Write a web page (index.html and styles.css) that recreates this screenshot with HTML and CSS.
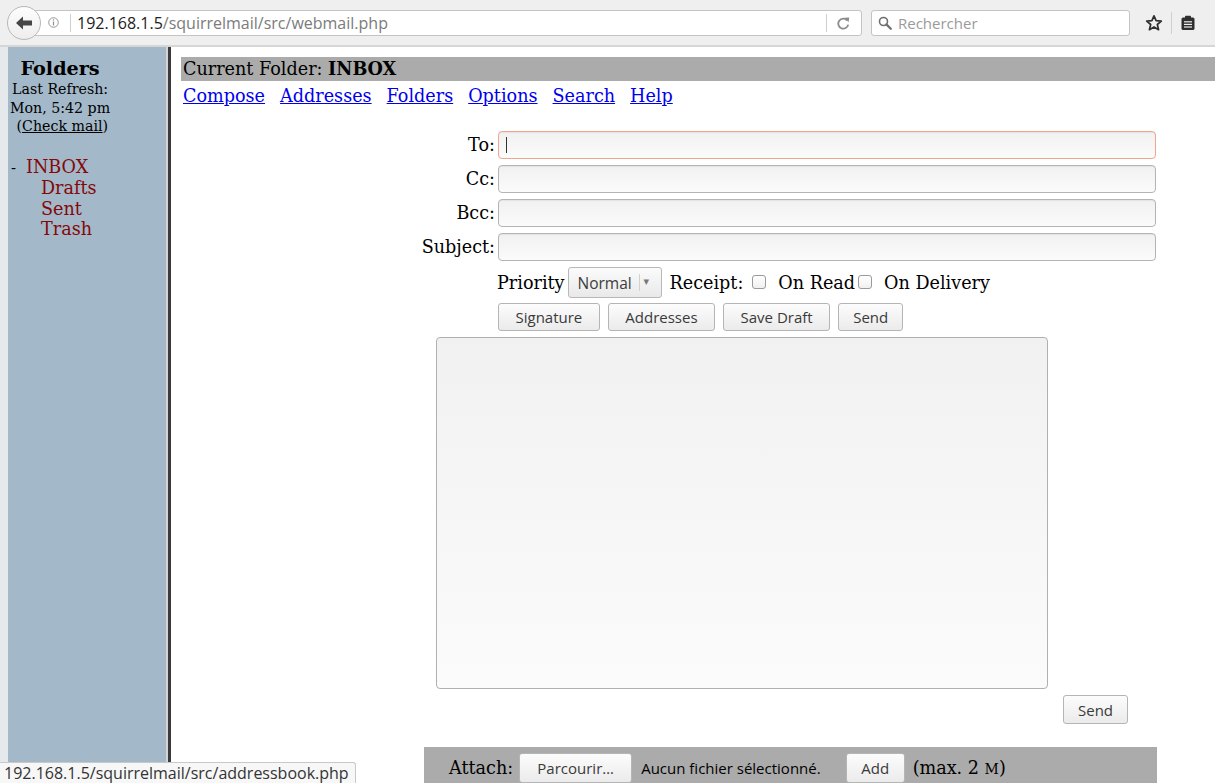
FILE: index.html
```html
<!DOCTYPE html>
<html lang="fr">
<head>
<meta charset="utf-8">
<title>SquirrelMail - Compose</title>
<link rel="stylesheet" href="styles.css">
</head>
<body>
<div class="window">
  <header class="toolbar">
    <button class="back" type="button" aria-label="Back">
      <svg width="18" height="14" viewBox="0 0 18 14"><polygon points="1,7 8,0.5 8,4.5 17,4.5 17,9.5 8,9.5 8,13.5" fill="#454545"/></svg>
    </button>
    <div class="urlbar">
      <svg class="info-icon" width="11" height="11" viewBox="0 0 12 12"><circle cx="6" cy="6" r="5.2" fill="none" stroke="#8c8c8c" stroke-width="1"/><line x1="6" y1="5" x2="6" y2="9.2" stroke="#8c8c8c" stroke-width="1.3"/><circle cx="6" cy="3.3" r="0.8" fill="#8c8c8c"/></svg>
      <span class="url-sep"></span>
      <span class="url"><span class="host">192.168.1.5</span>/squirrelmail/src/webmail.php</span>
      <span class="url-sep url-sep-end"></span>
      <svg class="reload" width="14" height="14" viewBox="0 0 14 14"><path d="M11 4.3A5 5 0 1 0 12.2 8.6" fill="none" stroke="#8c8c8c" stroke-width="1.8"/><polygon points="8.4,1.8 13.2,1.4 12.6,6.2" fill="#8c8c8c"/></svg>
    </div>
    <div class="searchbar">
      <svg width="14" height="14" viewBox="0 0 14 14"><circle cx="5.5" cy="5.5" r="4" fill="none" stroke="#6f6f6f" stroke-width="1.6"/><line x1="8.4" y1="8.4" x2="12.8" y2="12.8" stroke="#6f6f6f" stroke-width="2.2" stroke-linecap="round"/></svg>
      <span class="search-placeholder">Rechercher</span>
    </div>
    <svg class="tool-icon star" width="18" height="18" viewBox="0 0 18 18"><polygon points="9,1.8 11.1,6.7 16.3,7.1 12.3,10.5 13.6,15.7 9,12.9 4.4,15.7 5.7,10.5 1.7,7.1 6.9,6.7" fill="none" stroke="#2f2f2f" stroke-width="1.7" stroke-linejoin="round"/></svg>
    <span class="tool-sep"></span>
    <svg class="tool-icon reader" width="16" height="16" viewBox="0 0 16 16"><rect x="1.5" y="2.5" width="13" height="12.5" rx="1.6" fill="#2f2f2f"/><rect x="5" y="0.8" width="6" height="3" rx="0.8" fill="#2f2f2f"/><line x1="4" y1="6.8" x2="12" y2="6.8" stroke="#efefef" stroke-width="1.2"/><line x1="4" y1="9.4" x2="12" y2="9.4" stroke="#efefef" stroke-width="1.2"/><line x1="4" y1="12" x2="12" y2="12" stroke="#efefef" stroke-width="1.2"/></svg>
  </header>

  <div class="frames">
    <aside class="nav">
      <div class="nav-status">
        <div class="nav-title">Folders</div>
        <div class="nav-small">Last Refresh:</div>
        <div class="nav-small">Mon, 5:42 pm</div>
        <div class="nav-small">&nbsp;(<a class="check-mail" href="#">Check mail</a>)</div>
      </div>
      <ul class="folder-list">
        <li class="folder"><span class="toggle">-</span><a href="#">INBOX</a></li>
        <li class="folder folder-sub"><a href="#">Drafts</a></li>
        <li class="folder folder-sub"><a href="#">Sent</a></li>
        <li class="folder folder-sub"><a href="#">Trash</a></li>
      </ul>
    </aside>
    <div class="frame-border"></div>
    <main class="main">
      <div class="folder-bar">Current Folder: <b>INBOX</b></div>
      <nav class="menu">
        <a href="#">Compose</a>
        <a href="#">Addresses</a>
        <a href="#">Folders</a>
        <a href="#">Options</a>
        <a href="#">Search</a>
        <a href="#">Help</a>
      </nav>

      <form class="compose">
        <div class="field">
          <label class="field-label" for="send_to">To:</label>
          <span class="input-wrap input-wrap-active"><input class="field-input field-input-active" id="send_to" type="text"></span>
        </div>
        <div class="field">
          <label class="field-label" for="send_to_cc">Cc:</label>
          <span class="input-wrap"><input class="field-input" id="send_to_cc" type="text"></span>
        </div>
        <div class="field">
          <label class="field-label" for="send_to_bcc">Bcc:</label>
          <span class="input-wrap"><input class="field-input" id="send_to_bcc" type="text"></span>
        </div>
        <div class="field">
          <label class="field-label" for="subject">Subject:</label>
          <span class="input-wrap"><input class="field-input" id="subject" type="text"></span>
        </div>

        <div class="options">
          <span>Priority</span>
          <span class="select">
            <select class="select-box" name="mailprio">
              <option>Normal</option>
            </select>
          </span>
          <span class="opt-receipt">Receipt:</span>
          <input class="check check-read" type="checkbox">
          <span class="opt-label">On Read</span>
          <input class="check check-delivery" type="checkbox">
          <span class="opt-label">On Delivery</span>
        </div>

        <div class="actions">
          <button class="btn" type="button">Signature</button>
          <button class="btn" type="button">Addresses</button>
          <button class="btn" type="button">Save Draft</button>
          <button class="btn btn-send" type="button">Send</button>
        </div>

        <textarea class="message" name="body"></textarea>

        <div class="send-row">
          <button class="btn btn-send" type="button">Send</button>
        </div>

        <div class="attach">
          <span>Attach:</span>
          <button class="btn btn-browse" type="button">Parcourir…</button>
          <span class="file-name">Aucun fichier sélectionné.</span>
          <button class="btn btn-add" type="button">Add</button>
          <span class="max-size">(max. 2 <span class="unit">M</span>)</span>
        </div>
      </form>
    </main>
  </div>

  <div class="statusbar">192.168.1.5/squirrelmail/src/addressbook.php</div>
</div>
</body>
</html>
```

FILE: styles.css
```css
* {
  box-sizing: border-box;
}

html,
body {
  margin: 0;
  padding: 0;
}

body {
  font-family: "DejaVu Serif", serif;
  font-size: 17.6px;
  color: #000;
  background: #efefef;
  overflow: hidden;
}

.window {
  position: relative;
  width: 1215px;
  height: 783px;
  display: flex;
  flex-direction: column;
  overflow: hidden;
}

/* ---- browser toolbar ---- */
.toolbar {
  flex: none;
  height: 47px;
  display: flex;
  align-items: center;
  padding-left: 7px;
  background: #efefef;
  border-bottom: 2px solid #d6d6d6;
  font-family: "Open Sans", sans-serif;
}

.back {
  position: relative;
  z-index: 1;
  flex: none;
  width: 34px;
  height: 34px;
  padding: 0;
  border: 1px solid #b8b8b8;
  border-radius: 50%;
  background: linear-gradient(#fdfdfd, #ededed);
  display: flex;
  align-items: center;
  justify-content: center;
}

.urlbar {
  flex: none;
  width: 839px;
  height: 26px;
  margin-left: -18px;
  padding: 0 11px 0 24px;
  display: flex;
  align-items: center;
  background: #fff;
  border: 1px solid #c4c4c4;
  border-radius: 3px;
}

.info-icon {
  flex: none;
}

.url-sep {
  flex: none;
  width: 1px;
  height: 18px;
  margin-left: 11px;
  background: #cfcfcf;
}

.url {
  margin-left: 6px;
  font-size: 16px;
  color: #7b7b7b;
  white-space: nowrap;
  flex: 1;
}

.host {
  color: #222;
}

.url-sep-end {
  margin-left: 0;
  margin-right: 9px;
}

.reload {
  flex: none;
}

.searchbar {
  flex: none;
  width: 259px;
  height: 26px;
  margin-left: 9px;
  padding-left: 6px;
  display: flex;
  align-items: center;
  background: #fff;
  border: 1px solid #c4c4c4;
  border-radius: 3px;
}

.search-placeholder {
  margin-left: 6px;
  font-size: 15px;
  color: #9a9a9a;
}

.tool-icon {
  flex: none;
}

.star {
  margin-left: 15px;
}

.tool-sep {
  flex: none;
  width: 1px;
  height: 22px;
  margin-left: 8px;
  background: #d0d0d0;
}

.reader {
  margin-left: 8px;
}

/* ---- frameset ---- */
.frames {
  flex: 1;
  min-height: 0;
  display: flex;
  padding-left: 8px;
  background: #e6e9ec;
}

.nav {
  flex: none;
  width: 158px;
  padding: 10px 0 0 2px;
  background: #a3b8c9;
}

.nav-status {
  width: fit-content;
  text-align: center;
}

.nav-title {
  font-weight: bold;
  font-size: 19.2px;
  line-height: 23px;
}

.nav-small {
  font-size: 14.2px;
  line-height: 18.5px;
  white-space: nowrap;
}

.check-mail {
  color: #000;
}

.folder-list {
  list-style: none;
  margin: 21px 0 0;
  padding: 0 0 0 1px;
  line-height: 20.5px;
}

.folder a {
  color: #850808;
  text-decoration: none;
}

.toggle {
  display: inline-block;
  width: 15px;
  font-size: 15px;
}

.folder-sub {
  padding-left: 30px;
}

.frame-border {
  flex: none;
  width: 5px;
  border-left: 2px solid #d4d4d4;
  background: #3b3b3b;
}

.main {
  flex: 1;
  background: #fff;
  padding: 10px 0 0 10px;
}

.folder-bar {
  height: 24px;
  line-height: 24px;
  padding-left: 2px;
  background: #ababab;
}

.menu {
  display: flex;
  gap: 15px;
  margin-top: 5px;
  padding-left: 2px;
  line-height: 21px;
}

.menu a {
  color: #0000ee;
}

/* ---- compose form ---- */
.compose {
  margin-top: 24px;
}

.field {
  display: flex;
  align-items: center;
  gap: 3px;
  margin-bottom: 6px;
}

.field-label {
  width: 314px;
  text-align: right;
}

.input-wrap {
  position: relative;
  display: block;
}

.field-input {
  display: block;
  width: 658px;
  height: 28px;
  margin: 0;
  border: 1px solid #b4b4b4;
  border-radius: 4px;
  background: linear-gradient(#f1f1f1, #fbfbfb);
  box-shadow: inset 0 1px 1px rgba(0, 0, 0, 0.06);
  outline: none;
}

.field-input-active {
  border-color: #efa68a;
}

.input-wrap-active::after {
  content: "";
  position: absolute;
  left: 8px;
  top: 6px;
  width: 1px;
  height: 16px;
  background: #333;
}

.options {
  display: flex;
  align-items: center;
  height: 31px;
  margin-left: 316px;
  margin-bottom: 5px;
  white-space: nowrap;
}

.select {
  position: relative;
  margin-left: 3px;
  display: block;
}

.select-box {
  display: block;
  appearance: none;
  -webkit-appearance: none;
  width: 94px;
  height: 31px;
  margin: 0;
  padding: 0 0 0 9px;
  font-family: "Open Sans", sans-serif;
  font-size: 15.5px;
  color: #3c3c3c;
  border: 1px solid #b8b8b8;
  border-radius: 3px;
  background: linear-gradient(#fbfbfb, #e9e9e9);
}

.select::before {
  content: "";
  position: absolute;
  left: 71px;
  top: 7px;
  width: 1px;
  height: 17px;
  background: #d2d2d2;
}

.select::after {
  content: "▾";
  position: absolute;
  left: 76px;
  top: 8px;
  font-family: "DejaVu Sans", sans-serif;
  font-size: 11px;
  line-height: 14px;
  color: #777;
}

.opt-receipt {
  margin-left: 8px;
}

.check {
  appearance: none;
  -webkit-appearance: none;
  width: 14px;
  height: 14px;
  margin: -2px 0 0;
  border: 1px solid #9a9a9a;
  border-radius: 3px;
  background: linear-gradient(#fff, #f0f0f0);
}

.check-read {
  margin-left: 9px;
}

.check-delivery {
  margin-left: 3px;
}

.opt-label {
  margin-left: 12px;
}

.actions {
  display: flex;
  gap: 8px;
  margin-left: 317px;
}

.btn {
  height: 28px;
  margin: 0;
  padding: 0 16.5px;
  font-family: "Open Sans", sans-serif;
  font-size: 15px;
  color: #3a3a3a;
  border: 1px solid #b5b5b5;
  border-radius: 3px;
  background: linear-gradient(#fcfcfc, #ebebeb);
  white-space: nowrap;
}

.btn-send {
  width: 65px;
  padding: 0;
}

.message {
  display: block;
  width: 612px;
  height: 352px;
  margin: 6px 0 0 255px;
  resize: none;
  border: 1px solid #b0b0b0;
  border-radius: 4px;
  background: linear-gradient(#f1f1f1, #fbfbfb);
  outline: none;
}

.send-row {
  margin: 6px 0 0 882px;
}

.send-row .btn-send {
  height: 29px;
}

.attach {
  display: flex;
  align-items: center;
  width: 733px;
  height: 42px;
  margin: 23px 0 0 243px;
  padding-left: 25px;
  background: #ababab;
  white-space: nowrap;
}

.btn-browse {
  width: 113px;
  height: 30px;
  padding: 0;
  margin-left: 6px;
}

.file-name {
  margin-left: 9px;
  font-family: "Open Sans", sans-serif;
  font-size: 15px;
}

.btn-add {
  width: 59px;
  height: 30px;
  padding: 0;
  margin-left: 25px;
}

.max-size {
  margin-left: 8px;
}

.unit {
  font-size: 14px;
}

/* ---- status line ---- */
.statusbar {
  position: absolute;
  left: 0;
  bottom: 0;
  width: 356px;
  height: 21px;
  padding-left: 4px;
  font-family: "Open Sans", sans-serif;
  font-size: 16px;
  line-height: 20px;
  color: #333;
  background: #f7f7f7;
  border-top: 1px solid #c9c9c9;
  border-right: 1px solid #c9c9c9;
  border-top-right-radius: 3px;
  white-space: nowrap;
  overflow: hidden;
}
```
